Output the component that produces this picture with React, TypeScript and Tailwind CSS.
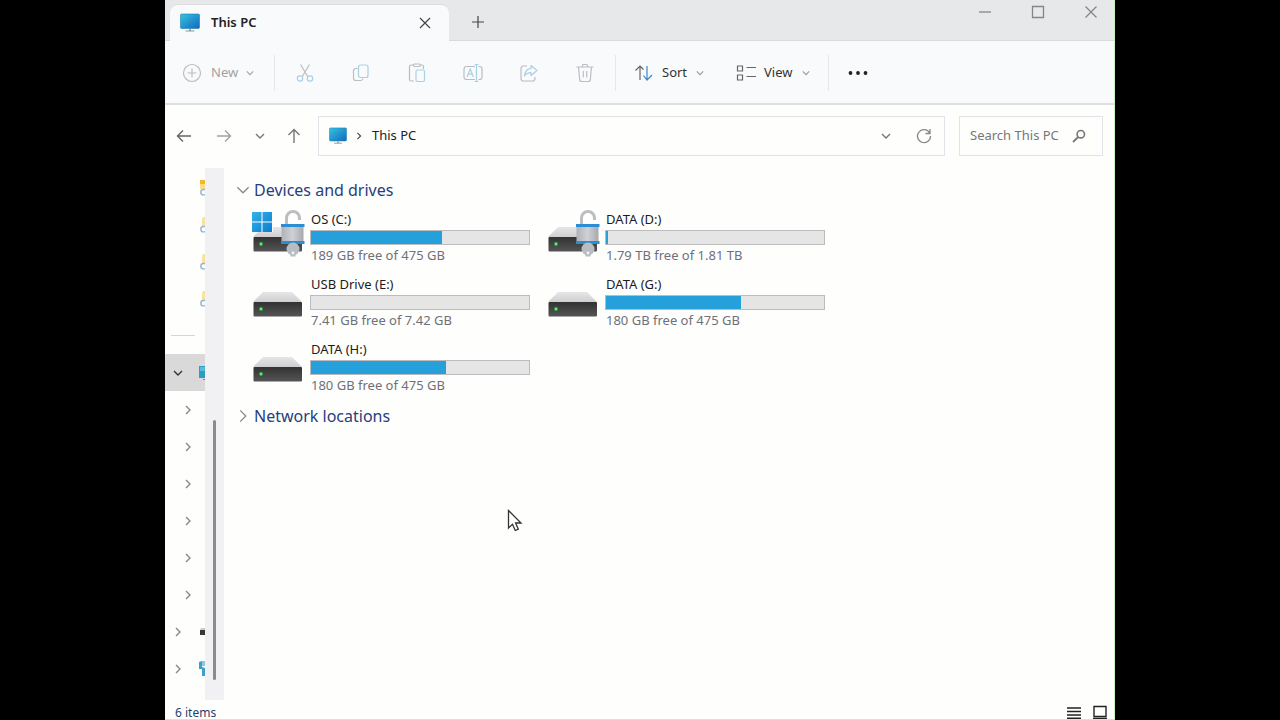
import type { ReactNode } from "react";

type Drive = {
  name: string;
  detail: string;
  used: number;
  locked?: boolean;
  system?: boolean;
};

const drives: Drive[] = [
  { name: "OS (C:)", detail: "189 GB free of 475 GB", used: 60, locked: true, system: true },
  { name: "DATA (D:)", detail: "1.79 TB free of 1.81 TB", used: 1, locked: true },
  { name: "USB Drive (E:)", detail: "7.41 GB free of 7.42 GB", used: 0 },
  { name: "DATA (G:)", detail: "180 GB free of 475 GB", used: 62 },
  { name: "DATA (H:)", detail: "180 GB free of 475 GB", used: 62 },
];

function Chevron({ dir, size = 10, className = "" }: { dir: "down" | "right"; size?: number; className?: string }) {
  return (
    <svg
      width={size}
      height={size}
      viewBox="0 0 10 10"
      fill="none"
      stroke="currentColor"
      strokeWidth={size > 10 ? 0.9 : 1.4}
      className={`shrink-0 ${className}`}
    >
      <path d={dir === "down" ? "M1 3l4 4 4-4" : "M3 1l4 4-4 4"} />
    </svg>
  );
}

function Monitor({ size = 20 }: { size?: number }) {
  return (
    <svg width={size} height={size} viewBox="0 0 20 20" className="shrink-0">
      <defs>
        <linearGradient id="screen" x1="0" y1="0" x2="1" y2="1">
          <stop offset="0" stopColor="#35c4e0" />
          <stop offset="1" stopColor="#1268bd" />
        </linearGradient>
      </defs>
      <rect x="0.5" y="1" width="19" height="14.5" rx="1.2" fill="url(#screen)" stroke="#1d7fb5" strokeWidth="0.6" />
      <path d="M9 16h2v2H9z" fill="#9aa5ad" />
      <path d="M5.5 18h9" stroke="#8c969d" />
    </svg>
  );
}

function Stroke({ children, size = 20 }: { children: ReactNode; size?: number }) {
  return (
    <svg width={size} height={size} viewBox="0 0 20 20" fill="none" stroke="#babdc1" strokeWidth="1.2" className="shrink-0">
      {children}
    </svg>
  );
}

const blue = "#a9d0e3";

const fileActions = [
  {
    label: "Cut",
    icon: (
      <>
        <path d="M5.5 1.5l7.2 12M14.5 1.5L7.3 13.5" />
        <circle cx="5" cy="15.5" r="2.7" stroke={blue} />
        <circle cx="15" cy="15.5" r="2.7" stroke={blue} />
      </>
    ),
  },
  {
    label: "Copy",
    icon: (
      <>
        <path d="M6.5 5.5H5a2.5 2.5 0 0 0-2.5 2.5v7A2.5 2.5 0 0 0 5 17.5h4.5a2.5 2.5 0 0 0 2.5-2" />
        <rect x="7.5" y="2" width="9.5" height="12.5" rx="2" stroke={blue} />
      </>
    ),
  },
  {
    label: "Paste",
    icon: (
      <>
        <path d="M7 18H4a1.5 1.5 0 0 1-1.5-1.5v-13A1.5 1.5 0 0 1 4 2h2.5M13.5 2H15a1.5 1.5 0 0 1 1.5 1.5V6" />
        <rect x="6.5" y="1" width="7" height="2.5" rx="1.2" />
        <rect x="9" y="7" width="8.5" height="11.5" rx="1.5" stroke={blue} />
      </>
    ),
  },
  {
    label: "Rename",
    icon: (
      <>
        <path d="M12 3.5H3.5A2.5 2.5 0 0 0 1 6v8a2.5 2.5 0 0 0 2.5 2.5H12M15.5 3.5h1A2.5 2.5 0 0 1 19 6v8a2.5 2.5 0 0 1-2.5 2.5h-1" />
        <path d="M4 14l3.2-8 3.2 8M5.2 11.2h4" stroke={blue} />
        <path d="M13.5 1.5v17M11.5 1.5h4M11.5 18.5h4" stroke={blue} />
      </>
    ),
  },
  {
    label: "Share",
    icon: (
      <>
        <path d="M8 3H4.5A2.5 2.5 0 0 0 2 5.5v10A2.5 2.5 0 0 0 4.5 18h9a2.5 2.5 0 0 0 2.5-2.5V14" />
        <path d="M12 2.5l6 5-6 5V9.7c-3 0-5 .8-6.5 3.3C6 8.5 8.5 5.6 12 5.3z" stroke={blue} strokeLinejoin="round" />
      </>
    ),
  },
  {
    label: "Delete",
    icon: (
      <>
        <path d="M1.5 4h17M7.5 4V2.5A1 1 0 0 1 8.5 1.5h3a1 1 0 0 1 1 1V4" />
        <path d="M3.5 4l1.2 12.5A2 2 0 0 0 6.700 18.500h6.600a2 2 0 0 0 2-2L16.500 4M8.300 8v6.500M11.700 8v6.500" />
      </>
    ),
  },
];

function Divider() {
  return <span className="h-9 w-px shrink-0 bg-[#e6e7e9]" />;
}

function TitleBar() {
  return (
    <header className="flex h-[41px] shrink-0 items-end border-b border-[#d9dadc] bg-[#e7e8ea] pl-[5px]">
      <div className="-mb-px flex h-9 w-[279px] items-center rounded-t-lg bg-[#f9fafc] pr-[18px] pl-[10px] shadow-[0_-1px_0_#dddee1]">
        <Monitor />
        <span className="ml-[11px] grow text-[13px] font-semibold text-[#222]">This PC</span>
        <button type="button" aria-label="Close tab" className="text-[#444]">
          <svg width="12" height="12" viewBox="0 0 12 12" stroke="currentColor" strokeWidth="1.2">
            <path d="M1 1l10 10M11 1L1 11" />
          </svg>
        </button>
      </div>
      <button type="button" aria-label="New tab" className="ml-[22px] flex h-9 items-center text-[#444]">
        <svg width="14" height="14" viewBox="0 0 14 14" stroke="currentColor" strokeWidth="1.2">
          <path d="M7 1v12M1 7h12" />
        </svg>
      </button>
      <div className="ml-auto flex h-full items-start gap-[39px] pt-[5px] pr-4 text-[#858585]">
        {[
          { label: "Minimize", d: "M1 7h12" },
          { label: "Maximize", d: "M1.5 1.5h11v11h-11z" },
          { label: "Close", d: "M1.5 1.5l11 11M12.5 1.5l-11 11" },
        ].map((b) => (
          <button key={b.label} type="button" aria-label={b.label}>
            <svg width="14" height="14" viewBox="0 0 14 14" fill="none" stroke="currentColor" strokeWidth="1.3">
              <path d={b.d} />
            </svg>
          </button>
        ))}
      </div>
    </header>
  );
}

function Toolbar() {
  return (
    <div className="flex h-16 shrink-0 items-center border-b-2 border-[#dedfe2] bg-[#f9fafc] pt-px pl-[17px] text-[13px] text-[#333]">
      <button type="button" className="flex w-[92px] items-center text-[#a0a2a5]">
        <Stroke>
          <circle cx="10" cy="10" r="8.5" />
          <path d="M10 5.5v9M5.5 10h9" />
        </Stroke>
        <span className="ml-[9px] grow text-left">New</span>
        <Chevron dir="down" size={8} className="mr-5" />
      </button>
      <Divider />
      <div className="mx-[2px] flex">
        {fileActions.map((a) => (
          <button key={a.label} type="button" aria-label={a.label} className="flex w-14 justify-center">
            <Stroke>{a.icon}</Stroke>
          </button>
        ))}
      </div>
      <Divider />
      <button type="button" className="ml-[18px] flex w-[70px] items-center">
        <Stroke>
          <path d="M6 17V3M1.5 7.5L6 3l3.5 3.5" stroke="#666" />
          <path d="M13 3v14M9.5 12.5L13 17l5-5" stroke="#3a86c4" />
        </Stroke>
        <span className="ml-2 grow text-left">Sort</span>
        <Chevron dir="down" size={8} className="text-[#999]" />
      </button>
      <button type="button" className="ml-8 flex w-[74px] items-center">
        <Stroke>
          <path d="M1.5 3h5v5h-5zM1.5 12h5v5h-5zM10.5 4.5H20M10.5 13.5H20" stroke="#666" />
        </Stroke>
        <span className="ml-2 grow text-left">View</span>
        <Chevron dir="down" size={8} className="text-[#999]" />
      </button>
      <span className="ml-[18px] flex">
        <Divider />
      </span>
      <button type="button" aria-label="See more" className="ml-[19px]">
        <svg width="20" height="6" viewBox="0 0 20 6" fill="#222">
          <circle cx="2.5" cy="3" r="1.9" />
          <circle cx="10" cy="3" r="1.9" />
          <circle cx="17.5" cy="3" r="1.9" />
        </svg>
      </button>
    </div>
  );
}

function AddressBar() {
  return (
    <div className="flex h-[63px] shrink-0 items-center pr-[11px] pb-[2px] pl-[10px]">
      <nav className="flex w-[143px] items-center text-[#777]">
        <button type="button" aria-label="Back">
          <svg width="18" height="18" viewBox="0 0 18 18" fill="none" stroke="#666" strokeWidth="1.4">
            <path d="M16 9H2.5M8 3.5L2.5 9 8 14.5" />
          </svg>
        </button>
        <button type="button" aria-label="Forward" className="ml-[22px]">
          <svg width="18" height="18" viewBox="0 0 18 18" fill="none" stroke="#a2a2a2" strokeWidth="1.4">
            <path d="M2 9h13.5M10 3.5L15.5 9 10 14.5" />
          </svg>
        </button>
        <button type="button" aria-label="Recent locations" className="ml-[22px]">
          <Chevron dir="down" />
        </button>
        <button type="button" aria-label="Up" className="ml-5">
          <svg width="18" height="18" viewBox="0 0 18 18" fill="none" stroke="currentColor" strokeWidth="1.4">
            <path d="M9 16V2.5M3.5 8L9 2.5 14.5 8" />
          </svg>
        </button>
      </nav>
      <div className="flex h-10 grow items-center border border-[#e2e3e8] pr-3 pl-[10px]">
        <Monitor size={18} />
        <Chevron dir="right" size={8} className="ml-2 text-[#444]" />
        <span className="ml-[9px] grow text-[13px] text-[#222]">This PC</span>
        <button type="button" aria-label="Previous locations" className="mr-[25px] text-[#777]">
          <Chevron dir="down" />
        </button>
        <button type="button" aria-label="Refresh">
          <svg width="16" height="16" viewBox="0 0 16 16" fill="none" stroke="#888" strokeWidth="1.3">
            <path d="M13.8 5.2A6.5 6.5 0 1 0 14.5 8M14 1v4.5H9.5" />
          </svg>
        </button>
      </div>
      <label className="ml-[14px] flex h-10 w-36 items-center border border-[#e2e3e8] pr-4 pl-[10px]">
        <input
          type="text"
          aria-label="Search"
          placeholder="Search This PC"
          className="w-full min-w-0 bg-transparent text-[13px] outline-none placeholder:text-[#767676]"
        />
        <svg width="14" height="14" viewBox="0 0 14 14" fill="none" stroke="#777" className="shrink-0">
          <circle cx="8.8" cy="5.2" r="3.7" strokeWidth="1.6" />
          <path d="M6.2 8L1 13" strokeWidth="1.8" />
        </svg>
      </label>
    </div>
  );
}

function Sidebar() {
  return (
    <aside className="flex w-[59px] shrink-0">
      <div className="w-10 overflow-hidden pt-px">
        {[0, 1, 2, 3].map((i) => (
          <div key={i} className="flex h-[37px] items-center pl-[34px]">
            <svg width="6" height="16" viewBox="0 0 6 16" className="shrink-0">
              {i === 0 ? (
                <>
                  <path d="M1 0h5v9H1z" fill="#fbdf85" />
                  <path d="M1 0h5v4H1z" fill="#f0b72f" />
                </>
              ) : (
                <path d="M4 0h2v9H3V2z" fill="#f9e3a0" />
              )}
              <path d="M6 9.5H4.5a2.7 2.7 0 0 0 0 5.4H6" fill="none" stroke="#94b5d8" strokeWidth="1.4" />
            </svg>
          </div>
        ))}
        <div className="flex h-[37px] items-center px-[6px]">
          <hr className="w-6 border-[#d3d6de]" />
        </div>
        <div className="flex h-[37px] items-center bg-[#d9d9d9] pl-2 text-[#333]">
          <Chevron dir="down" />
          <svg width="6" height="16" viewBox="0 0 6 16" className="ml-4 shrink-0">
            <path d="M0 1h6v12H0z" fill="#2d9cc4" />
            <path d="M1 2h5v4H1z" fill="#51bdd6" />
            <path d="M4 14h2v1H4z" fill="#789" />
          </svg>
        </div>
        {[0, 1, 2, 3, 4, 5].map((i) => (
          <div key={i} className="flex h-[37px] items-center pl-[18px] text-[#888]">
            <Chevron dir="right" />
          </div>
        ))}
        <div className="flex h-[37px] items-center pl-2 text-[#888]">
          <Chevron dir="right" />
          <svg width="6" height="10" viewBox="0 0 6 10" className="ml-4 shrink-0">
            <path d="M2 1h4v2H1z" fill="#ccc" />
            <path d="M1 3h5v5H1z" fill="#333a38" />
          </svg>
        </div>
        <div className="flex h-[37px] items-center pl-2 text-[#888]">
          <Chevron dir="right" />
          <svg width="6" height="16" viewBox="0 0 6 16" className="ml-4 shrink-0">
            <path d="M0 1l3-1v6l3 1v8H3V8H0z" fill="#3f9fc9" />
            <path d="M3 0h3v5H3z" fill="#8cc8df" />
          </svg>
        </div>
      </div>
      <div className="flex w-[19px] items-end justify-center bg-[#f1f1f3] pb-5">
        <span className="h-[260px] w-[3px] rounded-full bg-[#8b8b8b]" />
      </div>
    </aside>
  );
}

function DriveIcon({ locked, system }: { locked?: boolean; system?: boolean }) {
  return (
    <svg width="54" height="50" viewBox="0 0 54 50" className="shrink-0">
      <defs>
        <linearGradient id="lid" x1="0" y1="0" x2="0" y2="1">
          <stop offset="0" stopColor="#e6e6e8" />
          <stop offset="1" stopColor="#cfcfd2" />
        </linearGradient>
        <linearGradient id="front" x1="0" y1="0" x2="0" y2="1">
          <stop offset="0" stopColor="#323232" />
          <stop offset="1" stopColor="#555" />
        </linearGradient>
        <linearGradient id="lock" x1="0" y1="0" x2="1" y2="0">
          <stop offset="0" stopColor="#aeb1b6" />
          <stop offset="0.5" stopColor="#cfd1d5" />
          <stop offset="1" stopColor="#a5a9af" />
        </linearGradient>
        <linearGradient id="win" x1="0" y1="0" x2="1" y2="1">
          <stop offset="0" stopColor="#35b1e8" />
          <stop offset="1" stopColor="#0a7dd0" />
        </linearGradient>
      </defs>
      <path d="M11 18h29l10 10H1z" fill="url(#lid)" />
      <rect x="1.5" y="28" width="48.5" height="14.5" rx="1" fill="url(#front)" />
      <circle cx="9" cy="35" r="2.2" fill="#2f8f3d" />
      <circle cx="9" cy="35" r="1.2" fill="#6df07c" />
      {system && (
        <>
          <path d="M-1 1h22v22H-1z" fill="#fff" />
          <path d="M0 3h9.5v9.5H0zM10.5 3H20v9.5h-9.5zM0 13.5h9.5V23H0zM10.5 13.5H20V23h-9.5z" fill="url(#win)" />
        </>
      )}
      {locked && (
        <>
          <path d="M34.5 15V9a6.500 6.500 0 0 1 13 0V11" fill="none" stroke="#bcbec2" strokeWidth="3" />
          <rect x="29.5" y="15" width="22" height="19" rx="1" fill="url(#lock)" />
          <path d="M29 15h23.500v3H29zM29 32h23.500v3H29z" fill="#2b8ed2" />
          <circle cx="41" cy="40" r="6.500" fill="#b9bcc1" />
          <path d="M38.500 44h5v3.500h-5z" fill="#b9bcc1" />
          <circle cx="41" cy="44" r="1.400" fill="#f4f4f4" />
        </>
      )}
    </svg>
  );
}

function DriveTile({ drive }: { drive: Drive }) {
  return (
    <li className="flex h-[65px] w-[295px]">
      <DriveIcon locked={drive.locked} system={drive.system} />
      <div className="ml-1 w-[220px]">
        <p className="pl-px text-[13px] leading-5 text-[#1c1c24]">{drive.name}</p>
        <div className="my-px h-[15px] border border-[#bcbcbe] bg-[#e5e5e6]">
          <div className="h-full bg-[#26a0da]" style={{ width: `${drive.used}%` }} />
        </div>
        <p className="pl-px text-[13px] leading-[18px] text-[#707078]">{drive.detail}</p>
      </div>
    </li>
  );
}

export default function App() {
  return (
    <div className="h-screen bg-black px-[165px] font-['Noto_Sans','Segoe_UI',sans-serif]">
      <div className="relative flex h-full flex-col overflow-hidden border-r border-[#c4f3c0] bg-[#fefefd]">
        <TitleBar />
        <Toolbar />
        <AddressBar />
        <div className="flex min-h-0 grow">
          <Sidebar />
          <main className="min-w-0 grow pt-2 pl-3">
            <h2>
              <button type="button" className="flex h-7 items-center gap-1 text-[16px] text-[#27407c]">
                <Chevron dir="down" size={14} className="text-[#888]" />
                Devices and drives
              </button>
            </h2>
            <ul className="mt-[5px] flex max-w-[640px] flex-wrap pl-4">
              {drives.map((d) => (
                <DriveTile key={d.name} drive={d} />
              ))}
            </ul>
            <h2>
              <button type="button" className="flex h-6 items-center gap-1 text-[16px] text-[#27407c]">
                <Chevron dir="right" size={14} className="text-[#888]" />
                Network locations
              </button>
            </h2>
          </main>
        </div>
        <footer className="flex h-5 shrink-0 items-end border-b border-[#c4f3c0] pr-[6px] pl-[10px]">
          <span className="grow text-[12px] leading-3 text-[#27406c]">6 items</span>
          <button type="button" aria-label="Details view">
            <svg width="16" height="14" viewBox="0 0 16 14" stroke="#222" strokeWidth="1.4">
              <path d="M1 3h14M1 6.5h14M1 10h14M1 13.3h14" />
            </svg>
          </button>
          <button type="button" aria-label="Large icons view" className="ml-[10px]">
            <svg width="16" height="14" viewBox="0 0 16 14" fill="none" stroke="#222" strokeWidth="1.4">
              <path d="M2 1.5h12v10H2zM1 13.5h14" />
            </svg>
          </button>
        </footer>
        <svg width="16" height="24" viewBox="0 0 16 24" className="absolute top-[509px] left-[342px]">
          <path
            d="M1.5 1.5v17.5l4-3.7 2.8 6.2 3-1.3-2.7-6.2h5.4z"
            fill="#fff"
            stroke="#333"
            strokeWidth="1.3"
          />
        </svg>
      </div>
    </div>
  );
}
